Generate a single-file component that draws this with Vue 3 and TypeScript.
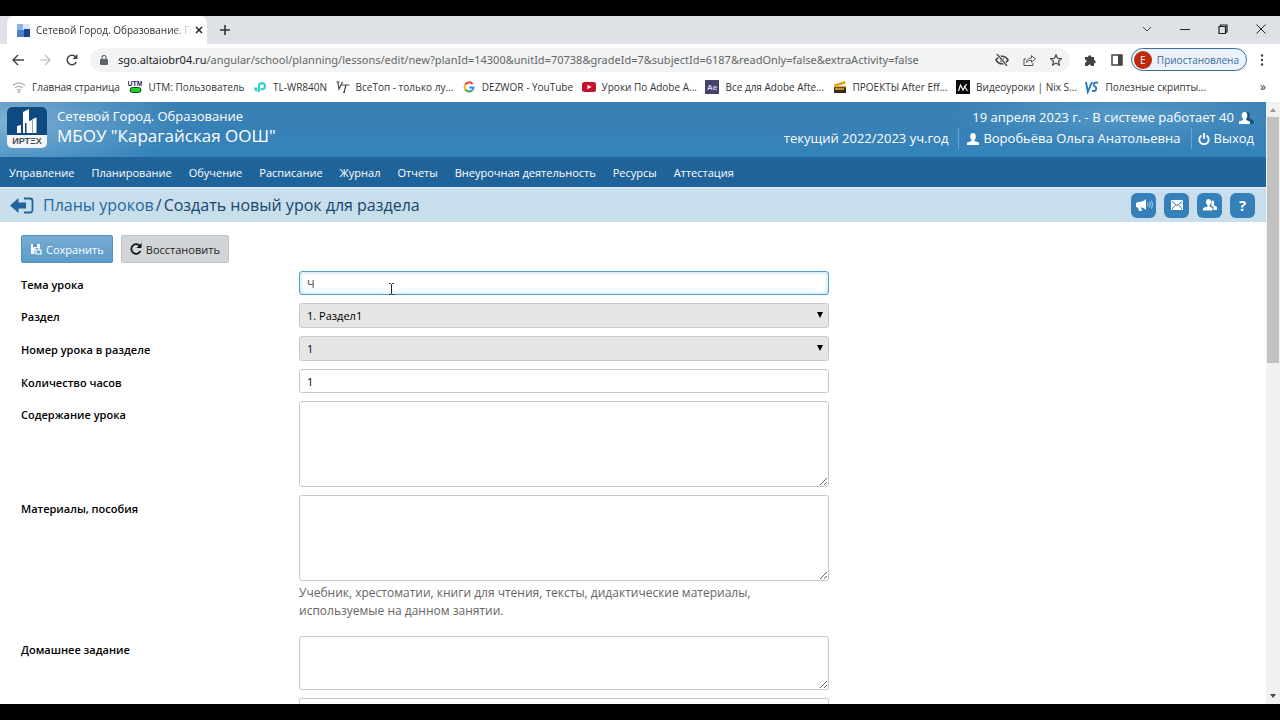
<script setup lang="ts">
import { ref } from 'vue'

interface Bookmark {
  icon: string
  label: string
}

const bookmarks: Bookmark[] = [
  { icon: 'wifi', label: 'Главная страница' },
  { icon: 'utm', label: 'UTM: Пользователь' },
  { icon: 'tplink', label: 'TL-WR840N' },
  { icon: 'vt', label: 'ВсеТоп - только лу...' },
  { icon: 'google', label: 'DEZWOR - YouTube' },
  { icon: 'youtube', label: 'Уроки По Adobe A...' },
  { icon: 'ae', label: 'Все для Adobe Afte...' },
  { icon: 'clap', label: 'ПРОЕКТЫ After Eff...' },
  { icon: 'nix', label: 'Видеоуроки | Nix S...' },
  { icon: 'vs', label: 'Полезные скрипты...' },
]

const menu: string[] = [
  'Управление',
  'Планирование',
  'Обучение',
  'Расписание',
  'Журнал',
  'Отчеты',
  'Внеурочная деятельность',
  'Ресурсы',
  'Аттестация',
]

const topic = ref('Ч')
const section = ref('1. Раздел1')
const lessonNumber = ref('1')
const hours = ref('1')
const content = ref('')
const materials = ref('')
const homework = ref('')
const extra = ref('')
</script>

<template>
  <div class="screen">
    <div class="tabstrip">
      <div class="tab-edge"></div>
      <div class="tab">
        <svg class="favicon" viewBox="0 0 13 13" aria-hidden="true">
          <rect width="13" height="13" fill="#dbe8f8" />
          <rect width="6" height="6" fill="#86b3ea" />
          <rect y="6" width="7" height="7" fill="#4a7fcf" />
          <rect x="7" y="5" width="6" height="8" fill="#1c4191" />
        </svg>
        <span class="tab-title">Сетевой Город. Образование. П</span>
        <button class="tab-close" aria-label="Закрыть вкладку">
          <svg viewBox="0 0 8 8" width="8" height="8"><path d="M1 1l6 6M7 1L1 7" stroke="#222" stroke-width="1.5" /></svg>
        </button>
      </div>
      <button class="new-tab" aria-label="Новая вкладка">
        <svg viewBox="0 0 10 10" width="10" height="10"><path d="M5 0v10M0 5h10" stroke="#333" stroke-width="1.6" /></svg>
      </button>
      <div class="window-buttons">
        <button aria-label="Поиск вкладок"><svg viewBox="0 0 10 10" width="10" height="10"><path d="M1 3l4 4 4-4" fill="none" stroke="#444" /></svg></button>
        <button aria-label="Свернуть"><svg viewBox="0 0 10 10" width="10" height="10"><path d="M0 5.5h10" stroke="#222" /></svg></button>
        <button aria-label="Восстановить окно"><svg viewBox="0 0 10 10" width="10" height="10"><path d="M1 2.5h6.5v7H1zM2.5 2.5V1h6.5v7H7.5" fill="none" stroke="#222" stroke-width="1.2" /></svg></button>
        <button aria-label="Закрыть"><svg viewBox="0 0 10 10" width="10" height="10"><path d="M.5.5l9 9M9.5.5l-9 9" stroke="#222" /></svg></button>
      </div>
    </div>

    <div class="toolbar">
      <button class="nav-btn" aria-label="Назад">
        <svg viewBox="0 0 12 12" width="12" height="12"><path d="M12 6H1.5M6 1L1 6l5 5" fill="none" stroke="#444" stroke-width="1.4" /></svg>
      </button>
      <button class="nav-btn" aria-label="Вперёд">
        <svg viewBox="0 0 12 12" width="12" height="12"><path d="M1 6h9.5M6 1l5 5-5 5" fill="none" stroke="#bbb" stroke-width="1.2" /></svg>
      </button>
      <button class="nav-btn" aria-label="Обновить">
        <svg viewBox="0 0 12 12" width="12" height="12"><path d="M10.3 8A4.8 4.8 0 1 1 9.6 2.8" fill="none" stroke="#444" stroke-width="1.5" /><path d="M11.5 0v5h-5z" fill="#444" /></svg>
      </button>
      <div class="omnibox">
        <svg class="lock" viewBox="0 0 8 10" width="8" height="10"><rect y="4" width="8" height="6" rx="1" fill="#5f6368" /><path d="M2 4V2.5a2 2 0 0 1 4 0V4" fill="none" stroke="#5f6368" stroke-width="1.2" /></svg>
        <span class="url"><b>sgo.altaiobr04.ru</b>/angular/school/planning/lessons/edit/new?planId=14300&amp;unitId=70738&amp;gradeId=7&amp;subjectId=6187&amp;readOnly=false&amp;extraActivity=false</span>
        <button aria-label="Сторонние cookie заблокированы">
          <svg viewBox="0 0 14 12" width="14" height="12"><path d="M1 6c3-5 9-5 12 0-3 5-9 5-12 0z" fill="none" stroke="#444" stroke-width="1.6" /><circle cx="7" cy="6" r="2.2" fill="#444" /><path d="M2 0l10 12" stroke="#f1f3f4" stroke-width="3" /><path d="M2 0l10 12" stroke="#444" stroke-width="1.3" /></svg>
        </button>
        <button aria-label="Поделиться">
          <svg viewBox="0 0 13 12" width="13" height="12"><path d="M3 5H1v6.5h9V9M3.5 8.5C4 5 6 4 8.5 4V1.5L12.3 5 8.5 8.3V6.2C6 6.2 4.7 7 3.5 8.5z" fill="none" stroke="#555" stroke-linejoin="round" /></svg>
        </button>
        <button aria-label="Добавить закладку">
          <svg viewBox="0 0 12 12" width="12" height="12"><path d="M6 .8l1.500 3.500 3.900.4-2.900 2.500.9 3.900L6 9.100l-3.400 2 .9-3.900L.6 4.700l3.900-.4z" fill="none" stroke="#444" stroke-width="1.200" /></svg>
        </button>
      </div>
      <div class="extensions">
        <button aria-label="Расширения">
          <svg viewBox="0 0 12 12" width="12" height="12"><path d="M1 3h3a1.700 1.700 0 1 1 3.400 0H10v3a1.700 1.700 0 1 1 0 3.400V12H7.200a1.600 1.600 0 0 0-3.200 0H1V8.800a1.600 1.600 0 0 0 0-3.200z" fill="#444" /></svg>
        </button>
        <button aria-label="Боковая панель">
          <svg viewBox="0 0 12 12" width="12" height="12"><rect x="1" y="1" width="10" height="10" fill="none" stroke="#444" stroke-width="1.5" /><rect x="7" y="1" width="4" height="10" fill="#444" /></svg>
        </button>
      </div>
      <button class="profile"><span class="avatar">Е</span><span>Приостановлена</span></button>
      <button class="more" aria-label="Меню браузера">
        <svg viewBox="0 0 4 12" width="4" height="12" fill="#444"><circle cx="2" cy="1.5" r="1.2" /><circle cx="2" cy="6" r="1.2" /><circle cx="2" cy="10.5" r="1.2" /></svg>
      </button>
    </div>

    <div class="bookmarks">
      <nav class="bookmark-list" aria-label="Закладки">
        <a v-for="item in bookmarks" :key="item.label" href="#" class="bookmark">
          <svg v-if="item.icon === 'wifi'" viewBox="0 0 14 14"><path d="M1 5.5c4-3.500 8-3.500 12 0M3 8c3-2.300 5-2.300 8 0M5 10.300c1.500-1 2.500-1 4 0" fill="none" stroke="#aaa" stroke-width="1.2" /><circle cx="7" cy="12" r="1" fill="#999" /></svg>
          <svg v-else-if="item.icon === 'utm'" viewBox="0 0 14 14"><text x="7" y="6" text-anchor="middle" font-size="7" font-weight="700" fill="#222266" font-family="Liberation Sans, sans-serif">UTM</text><rect x="2" y="7.5" width="11" height="5" rx="2.5" fill="#20d02c" stroke="#174a1b" /></svg>
          <svg v-else-if="item.icon === 'tplink'" viewBox="0 0 14 14"><path d="M6 12V6a3 3 0 1 1 3 3.200H7.500" fill="none" stroke="#3ccdd2" stroke-width="2.200" /><path d="M1 7.500h3.500v4A3.500 3.500 0 0 1 1 8z" fill="#3ccdd2" /></svg>
          <svg v-else-if="item.icon === 'vt'" viewBox="0 0 14 14"><path d="M.5 2h3M1.800 2l1.200 7L6.500 2M6 5h7.500M10 5L8 12.500M7 12.500h2" fill="none" stroke="#444" stroke-width="1.2" /></svg>
          <svg v-else-if="item.icon === 'google'" viewBox="0 0 14 14" fill="none" stroke-width="2"><path d="M10.600 4A4.500 4.500 0 0 0 3.200 4.700" stroke="#ea4335" /><path d="M3.200 4.700a4.500 4.500 0 0 0 0 4.600" stroke="#fbbc05" /><path d="M3.200 9.300a4.500 4.500 0 0 0 7 1" stroke="#34a853" /><path d="M10.200 10.300A4.500 4.500 0 0 0 11.500 7.400H7.200" stroke="#4285f4" /></svg>
          <svg v-else-if="item.icon === 'youtube'" viewBox="0 0 14 14"><rect y="2" width="14" height="10" rx="2.5" fill="#c4122b" /><path d="M5.500 4.700v4.600L9.500 7z" fill="#fff" /></svg>
          <svg v-else-if="item.icon === 'ae'" viewBox="0 0 14 14"><rect width="14" height="14" fill="#46436a" /><text x="7" y="10" text-anchor="middle" font-size="8" font-weight="700" fill="#d6d2f3" font-family="Liberation Sans, sans-serif">Ae</text></svg>
          <svg v-else-if="item.icon === 'clap'" viewBox="0 0 14 14"><path d="M1 4.500L12 1l.8 2.500L2 6.500z" fill="#d9a21c" /><rect x="1" y="6" width="12" height="7" fill="#3b2a14" /><path d="M1 6.500h12M2 9h9" stroke="#e4b63a" stroke-width="1.5" /></svg>
          <svg v-else-if="item.icon === 'nix'" viewBox="0 0 14 14"><rect width="14" height="14" fill="#0b0b0b" /><path d="M2.500 11l2-6 2.500 5 3.500-6M8 6l3.500 5" fill="none" stroke="#fff" stroke-width="1.1" /></svg>
          <svg v-else viewBox="0 0 14 14"><path d="M1 2l1.800 10L7 2M13 2.800c-3-.8-4.500.2-4.300 2 .3 2 3 1.700 2.500 4.200-.4 2-2.200 2.500-4.200 1.700" fill="none" stroke="#2d79bd" stroke-width="1.9" /></svg>
          <span>{{ item.label }}</span>
        </a>
      </nav>
      <button class="overflow" aria-label="Другие закладки">»</button>
    </div>

    <div class="viewport">
      <div class="page">
        <header class="header">
          <svg class="logo" viewBox="0 0 40 41" role="img" aria-label="ИРТЕХ">
            <rect width="40" height="41" rx="5" fill="#f3f5f8" />
            <path d="M0 28V5a5 5 0 0 1 5-5h30a5 5 0 0 1 5 5v23z" fill="#0e4a80" />
            <path d="M10 19l4-1v8h-4zM16 5l6-3v24h-2.500V16H18v10h-2zM22 14l3-1V26h-3zM25.500 12l4-1.500V26h-4z" fill="#fff" />
            <text x="20" y="37" text-anchor="middle" font-size="9" font-weight="700" fill="#4a4f57" font-family="Liberation Sans, sans-serif">ИРТΞХ</text>
          </svg>
          <div class="titles">
            <div class="product">Сетевой Город. Образование</div>
            <div class="school">МБОУ "Карагайская ООШ"</div>
          </div>
          <div class="session">
            <div class="session-row">
              <span>19 апреля 2023 г. - В системе работает 40</span>
              <svg viewBox="0 0 16 12" width="16" height="12"><path d="M9 0c3 0 3.500 3 2 6l4.500 2.500V12H9z" fill="#14507f" /><ellipse cx="6.500" cy="3.500" rx="2.800" ry="3.500" fill="#fff" /><path d="M5 6h3v2l4 1.500V12H1V9.500L5 8z" fill="#fff" /></svg>
            </div>
            <div class="session-row">
              <span>текущий 2022/2023 уч.год</span>
              <a href="#" class="user">
                <svg viewBox="0 0 12 12" width="12" height="12"><ellipse cx="6" cy="3.5" rx="2.8" ry="3.5" fill="#fff" /><path d="M4.500 6h3v2l4.500 1.500V12H0V9.500L4.500 8z" fill="#fff" /></svg>
                <span>Воробьёва Ольга Анатольевна</span>
              </a>
              <a href="#" class="logout">
                <svg viewBox="0 0 12 12" width="12" height="12"><path d="M3.500 2.500a4.700 4.700 0 1 0 5 0M6 0v6" fill="none" stroke="#fff" stroke-width="1.8" /></svg>
                <span>Выход</span>
              </a>
            </div>
          </div>
        </header>

        <nav class="menu" aria-label="Главное меню">
          <a v-for="entry in menu" :key="entry" href="#">{{ entry }}</a>
        </nav>

        <div class="crumbs">
          <button class="back" aria-label="Назад к планам">
            <svg viewBox="0 0 24 17" width="24" height="17"><path d="M0 8.500L8.500 1v4.500H16v6H8.500V16z" fill="#1e649b" /><path d="M14 1.500h6a2.500 2.500 0 0 1 2.500 2.500v9a2.500 2.500 0 0 1-2.500 2.500h-6" fill="none" stroke="#1e649b" stroke-width="1.8" /></svg>
          </button>
          <h1><a href="#">Планы уроков</a><span class="slash">/</span>Создать новый урок для раздела</h1>
          <div class="quick">
            <button aria-label="Объявления"><svg viewBox="0 0 18 14" width="18" height="14"><path d="M1 5l2-1c4 0 6-1 8-3v11C9 10 7.500 9.500 6 9.500L7 13H4L3 9.500H2L1 8.500z" fill="#fff" /><path d="M12.500 4.500q1.500 2 0 4M14.500 3.500q2 3 0 6M16.500 2.500q2 4 0 8" fill="none" stroke="#b9d7ec" stroke-width=".9" /></svg></button>
            <button aria-label="Почта"><svg viewBox="0 0 12 10" width="12" height="10"><rect width="12" height="10" rx="1" fill="#fff" /><path d="M1 1.500l5 4 5-4M1 9l3.500-4M11 9L7.500 5" fill="none" stroke="#3580b8" /></svg></button>
            <button aria-label="Пользователи"><svg viewBox="0 0 14 12" width="14" height="12" fill="#fff"><ellipse cx="5.500" cy="3" rx="2.500" ry="3" /><path d="M4.500 5h2v2.500l3 1.500v2.500H0V9l4.500-1.500zM8.500 1.500c3-.5 3.300 2 2.200 4.500l3.300 2v3h-3.500V8L8.300 7z" /></svg></button>
            <button class="help" aria-label="Справка">?</button>
          </div>
        </div>

        <main>
          <div class="actions">
            <button class="btn save">
              <svg viewBox="0 0 12 12" width="12" height="12"><path d="M1 1h9v4H4.500v6H1z" fill="#fff" /><path d="M3 1h4v3H3z" fill="#5b98c8" /><path d="M6 7h5v4H6zM9 4v3M3 6h3" fill="none" stroke="#fff" stroke-width="1.2" /></svg>
              <span>Сохранить</span>
            </button>
            <button class="btn restore">
              <svg viewBox="0 0 12 12" width="12" height="12"><path d="M10.500 8A4.800 4.800 0 1 1 9.800 2.900" fill="none" stroke="#111" stroke-width="1.7" /><path d="M11.500 0v5h-5z" fill="#111" /></svg>
              <span>Восстановить</span>
            </button>
          </div>

          <form class="form" @submit.prevent>
            <label for="topic">Тема урока</label>
            <div class="field">
              <input id="topic" v-model="topic" class="active" type="text" />
              <svg class="ibeam" viewBox="0 0 7 12" width="7" height="12"><path d="M1 .5h1.500l1 1 1-1H6M3.500 1.500v9M1 11.500h1.500l1-1 1 1H6" fill="none" stroke="#222" /></svg>
            </div>

            <label for="section">Раздел</label>
            <div class="field">
              <select id="section" v-model="section"><option>1. Раздел1</option></select>
              <svg class="caret" viewBox="0 0 6 6" width="6" height="6"><path d="M0 0h6L3 6z" /></svg>
            </div>

            <label for="number">Номер урока в разделе</label>
            <div class="field">
              <select id="number" v-model="lessonNumber"><option>1</option></select>
              <svg class="caret" viewBox="0 0 6 6" width="6" height="6"><path d="M0 0h6L3 6z" /></svg>
            </div>

            <label for="hours">Количество часов</label>
            <div class="field"><input id="hours" v-model="hours" type="text" /></div>

            <label for="content">Содержание урока</label>
            <div class="field"><textarea id="content" v-model="content" class="tall"></textarea></div>

            <label for="materials">Материалы, пособия</label>
            <div class="field">
              <textarea id="materials" v-model="materials" class="tall"></textarea>
              <p class="hint">Учебник, хрестоматии, книги для чтения, тексты, дидактические материалы, используемые на данном занятии.</p>
            </div>

            <label for="homework">Домашнее задание</label>
            <div class="field"><textarea id="homework" v-model="homework" class="short"></textarea></div>

            <div></div>
            <div class="field"><input v-model="extra" type="text" aria-label="Дополнительно" /></div>
          </form>
        </main>
      </div>

      <div class="scrollbar" aria-hidden="true">
        <svg viewBox="0 0 6 4" width="6" height="4"><path d="M0 4l3-4 3 4z" fill="#999" /></svg>
        <div class="track"><div class="thumb"></div></div>
        <svg viewBox="0 0 6 4" width="6" height="4"><path d="M0 0l3 4 3-4z" fill="#444" /></svg>
      </div>
    </div>
  </div>
</template>

<style>
body {
  margin: 0;
  background: #000;
}
</style>

<style scoped>
* {
  box-sizing: border-box;
}

.screen {
  display: flex;
  flex-direction: column;
  height: 100vh;
  padding: 16px 0;
  background: #000;
  font-family: "Open Sans", "Noto Sans", sans-serif;
  font-size: 12px;
  color: #333;
  overflow: hidden;
}

button {
  display: flex;
  align-items: center;
  justify-content: center;
  padding: 0;
  border: 0;
  background: none;
  font-family: inherit;
  color: inherit;
}

a {
  color: inherit;
  text-decoration: none;
}

svg {
  display: block;
  flex: none;
}

.tabstrip {
  display: flex;
  flex: none;
  align-items: stretch;
  height: 28px;
  background: #dee1e6;
}

.tab-edge {
  width: 7px;
}

.tab {
  display: flex;
  align-items: center;
  width: 200px;
  padding: 0 8px 0 10px;
  border-radius: 7px 7px 0 0;
  background: #fff;
}

.favicon {
  width: 13px;
  height: 13px;
}

.tab-title {
  flex: 1;
  margin: 0 3px 0 6px;
  white-space: nowrap;
  font-size: 10px;
  mask-image: linear-gradient(to right, #000 88%, transparent);
}

.tab-close {
  width: 10px;
}

.new-tab {
  width: 36px;
}

.window-buttons {
  display: flex;
  margin-left: auto;
}

.window-buttons button {
  width: 38px;
  padding-bottom: 3px;
}

.toolbar {
  display: flex;
  flex: none;
  align-items: center;
  height: 31px;
  padding: 0 8px 0 4px;
  background: #fff;
}

.nav-btn {
  width: 27px;
}

.omnibox {
  display: flex;
  flex: 1;
  align-items: center;
  gap: 14px;
  min-width: 0;
  height: 24px;
  margin-left: 5px;
  padding: 0 8px 0 10px;
  border-radius: 12px;
  background: #f1f3f4;
}

.lock {
  margin-right: -4px;
}

.url {
  flex: 1;
  white-space: nowrap;
  font-family: "Noto Sans", sans-serif;
  font-size: 11px;
  color: #666;
}

.url b {
  font-weight: 400;
  color: #222;
}

.extensions {
  display: flex;
  gap: 15px;
  margin: 0 8px 0 14px;
}

.profile {
  gap: 5px;
  height: 23px;
  padding: 0 7px 0 2px;
  border: 1px solid #3a6c9e;
  border-radius: 12px;
  background: #eaf2fb;
  color: #3d6a9a;
  font-size: 10px;
}

.avatar {
  width: 18px;
  height: 18px;
  border-radius: 50%;
  background: #c02a0c;
  color: #fff;
  line-height: 18px;
}

.more {
  width: 20px;
  margin-left: 5px;
}

.bookmarks {
  display: flex;
  flex: none;
  align-items: center;
  height: 27px;
  padding: 0 14px 4px 12px;
  background: #fff;
}

.bookmark-list {
  display: flex;
  flex: 1;
  justify-content: space-between;
  margin-right: 54px;
}

.bookmark {
  display: flex;
  align-items: center;
  gap: 6px;
  font-size: 10px;
  white-space: nowrap;
}

.bookmark svg {
  width: 14px;
  height: 14px;
}

.overflow {
  font-size: 12px;
}

.viewport {
  display: flex;
  flex: 1;
  min-height: 0;
  background: #fff;
}

.page {
  flex: 1;
  min-width: 0;
  overflow: hidden;
}

.header {
  display: flex;
  align-items: flex-start;
  height: 55px;
  padding: 5px 12px 0 7px;
  background:
    radial-gradient(ellipse 180px 60px at 0 20px, rgba(170, 210, 235, 0.6), transparent),
    radial-gradient(ellipse 170px 36px at 1120px 12px, rgba(110, 175, 215, 0.5), transparent),
    linear-gradient(#3a7fb3, #3583bb);
  color: #fff;
}

.logo {
  width: 40px;
  height: 41px;
}

.titles {
  margin-left: 10px;
}

.product {
  font-size: 13px;
  line-height: 18px;
}

.school {
  font-size: 17px;
  line-height: 22px;
}

.session {
  display: flex;
  flex-direction: column;
  align-items: flex-end;
  margin-left: auto;
  font-size: 13px;
}

.session-row {
  display: flex;
  align-items: center;
  gap: 4px;
  line-height: 21px;
}

.user,
.logout {
  display: flex;
  align-items: center;
  gap: 4px;
  margin-left: 6px;
  border-left: 1px solid #6ba6d0;
}

.user {
  padding-left: 8px;
}

.logout {
  padding-left: 6px;
}

.menu {
  display: flex;
  align-items: center;
  gap: 17px;
  height: 30px;
  padding: 0 9px;
  background: #1e649b;
  color: #fff;
  font-size: 11px;
}

.crumbs {
  display: flex;
  align-items: center;
  height: 35px;
  padding: 0 11px 0 10px;
  border-top: 1px solid #e4f0f8;
  background: #c9deec;
}

h1 {
  margin: 0 0 0 9px;
  font-size: 16px;
  font-weight: 400;
  line-height: 22px;
  color: #17456c;
}

h1 a {
  color: #2568a0;
}

.slash {
  margin: 0 2px;
}

.quick {
  display: flex;
  gap: 8px;
  margin-left: auto;
}

.quick button {
  width: 25px;
  height: 25px;
  border-radius: 6px;
  background: #3580b8;
}

.quick .help {
  color: #fff;
  font-size: 15px;
  font-weight: 700;
}

main {
  padding: 13px 21px 0;
}

.actions {
  display: flex;
  gap: 8px;
}

.btn {
  gap: 4px;
  height: 28px;
  padding: 0 8px;
  border: 1px solid #c0c3c5;
  border-radius: 2px;
  background: #d2d5d7;
  color: #222;
  font-size: 11px;
}

.save {
  border-color: #5590bd;
  background: linear-gradient(#76add4, #5c9bca);
  color: #fff;
}

.form {
  display: grid;
  grid-template-columns: 278px minmax(0, 530px);
  row-gap: 8px;
  margin-top: 8px;
}

label {
  padding-top: 6px;
  font-size: 11px;
  font-weight: 600;
  line-height: 16px;
  color: #000;
}

.field {
  position: relative;
}

input,
select,
textarea {
  display: block;
  width: 100%;
  margin: 0;
  padding: 0 7px;
  border: 1px solid #c8c8c8;
  border-radius: 3px;
  outline: 0;
  background: #fff;
  font-family: inherit;
  font-size: 11px;
  font-weight: 500;
  color: #000;
}

input {
  height: 24px;
}

input.active {
  border-color: #4ba0c8;
  box-shadow: inset 0 0 4px #a5dcf0;
  font-weight: 400;
  color: #444;
}

select {
  height: 25px;
  appearance: none;
  background: #e6e6e6;
}

textarea {
  resize: both;
}

.tall {
  height: 86px;
}

.short {
  height: 54px;
}

.caret {
  position: absolute;
  top: 9px;
  right: 6px;
}

.ibeam {
  position: absolute;
  top: 12px;
  left: 89px;
}

.hint {
  margin: 3px 0 8px;
  padding-right: 60px;
  font-size: 12px;
  line-height: 18px;
  color: #666;
}

.scrollbar {
  display: flex;
  flex-direction: column;
  align-items: center;
  width: 14px;
  padding: 6px 0;
  background: #f1f1f1;
}

.track {
  flex: 1;
  width: 12px;
  margin: 5px 0;
}

.thumb {
  height: 43%;
  background: #c1c1c1;
}
</style>
